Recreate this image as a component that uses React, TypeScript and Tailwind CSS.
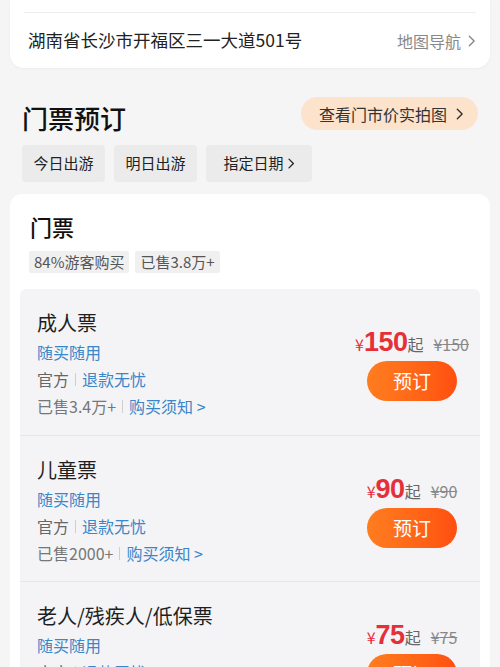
import React from "react";

const font = { fontFamily: '"Noto Sans CJK SC", "Noto Sans", sans-serif' };

function Chevron({ className = "" }: { className?: string }) {
  return (
    <svg viewBox="0 0 10 16" className={className} fill="none" stroke="currentColor" strokeWidth="1.6" strokeLinecap="round" strokeLinejoin="round">
      <path d="M2.5 2.5 L8 8 L2.5 13.5" />
    </svg>
  );
}

type Ticket = {
  name: string;
  sold: string;
  price: string;
  first?: boolean;
};

const tickets: Ticket[] = [
  { name: "成人票", sold: "已售3.4万+", price: "150", first: true },
  { name: "儿童票", sold: "已售2000+", price: "90" },
  { name: "老人/残疾人/低保票", sold: "已售1000+", price: "75" },
];

function TicketRow({ t }: { t: Ticket }) {
  return (
    <div className={`flex bg-[#f4f4f6] ${t.first ? "rounded-t-[6px]" : "border-t border-[#e6e6ea]"} h-[146px] shrink-0`}>
      <div className="flex-1 pl-[17px] pt-[20px]">
        <div className="text-[20px] leading-[28px] text-[#1f1f1f]">{t.name}</div>
        <div className="mt-[2px] text-[16px] leading-[27px] text-[#3b86c8]">随买随用</div>
        <div className="flex items-center text-[16px] leading-[27px]">
          <span className="text-[#666]">官方</span>
          <span className="mx-[6px] h-[13px] w-px bg-[#cfcfcf]" />
          <span className="text-[#3b86c8]">退款无忧</span>
        </div>
        <div className="flex items-center text-[16px] leading-[27px]">
          <span className="text-[#777]">{t.sold}</span>
          <span className="mx-[6px] h-[13px] w-px bg-[#cfcfcf]" />
          <span className="text-[#3b86c8]">购买须知 &gt;</span>
        </div>
      </div>
      <div className="mr-[3px] flex w-[130px] flex-col items-center pt-[37px]">
        <div className="flex items-baseline h-[32px] leading-[32px] whitespace-nowrap">
          <span className="text-[16px] text-[#e5303a]">¥</span>
          <span className="text-[27px] font-bold text-[#e5303a] tracking-[-0.5px]" style={{ fontFamily: '"Liberation Sans", "Noto Sans", sans-serif' }}>{t.price}</span>
          <span className="text-[16px] text-[#666]">起</span>
          <span className="ml-[10px] text-[16px] text-[#888] line-through">¥{t.price}</span>
        </div>
        <button className="mt-[3px] h-[40px] w-[90px] rounded-full bg-gradient-to-r from-[#ff7d1f] to-[#ff4f10] text-[19px] text-white flex items-center justify-center">
          预订
        </button>
      </div>
    </div>
  );
}

export default function App() {
  return (
    <div className="h-[667px] w-[500px] overflow-hidden bg-[#f5f5f5]" style={font}>
      {/* address card */}
      <div className="mx-[10px] rounded-b-[14px] bg-white px-[14px] pt-[12px] shadow-[0_1px_3px_rgba(0,0,0,0.04)]">
        <div className="h-px bg-[#eeeeee]" />
        <div className="flex h-[55px] items-center justify-between pl-[4px]">
          <span className="text-[17.5px] text-[#222]">湖南省长沙市开福区三一大道501号</span>
          <span className="flex items-center text-[16px] text-[#888]">
            地图导航
            <Chevron className="ml-[6px] h-[14px] w-[9px]" />
          </span>
        </div>
      </div>

      {/* header */}
      <div className="mt-[29px] flex items-start justify-between pl-[22px] pr-[22px]">
        <div className="mt-[3px] text-[26px] font-medium leading-[36px] text-[#111]">门票预订</div>
        <button className="flex h-[33px] items-center rounded-full bg-[#fde2cc] pl-[18px] pr-[14px] text-[16px] text-[#333]">
          查看门市价实拍图
          <Chevron className="ml-[8px] h-[14px] w-[9px]" />
        </button>
      </div>

      {/* chips */}
      <div className="mt-[9px] flex gap-[9px] pl-[22px]">
        <div className="flex h-[37px] w-[83px] items-center justify-center rounded-[4px] bg-[#ebebeb] text-[15px] text-[#222]">今日出游</div>
        <div className="flex h-[37px] w-[83px] items-center justify-center rounded-[4px] bg-[#ebebeb] text-[15px] text-[#222]">明日出游</div>
        <div className="flex h-[37px] w-[106px] items-center justify-center rounded-[4px] bg-[#ebebeb] text-[15px] text-[#222]">
          指定日期
          <Chevron className="ml-[3px] h-[13px] w-[8px]" />
        </div>
      </div>

      {/* ticket card */}
      <div className="mx-[10px] mt-[12px] rounded-[12px] bg-white px-[10px] pt-[17px]">
        <div className="pl-[10px] text-[22px] font-medium leading-[30px] text-[#111]">门票</div>
        <div className="mt-[10px] flex gap-[6px] pl-[9px]">
          <span className="flex h-[22px] items-center rounded-[2px] bg-[#f0f0f0] px-[5px] text-[15px] text-[#555]">84%游客购买</span>
          <span className="flex h-[22px] items-center rounded-[2px] bg-[#f0f0f0] px-[5px] text-[15px] text-[#555]">已售3.8万+</span>
        </div>
        <div className="mt-[16px] flex flex-col">
          {tickets.map((t) => (
            <TicketRow key={t.name} t={t} />
          ))}
        </div>
      </div>
    </div>
  );
}
